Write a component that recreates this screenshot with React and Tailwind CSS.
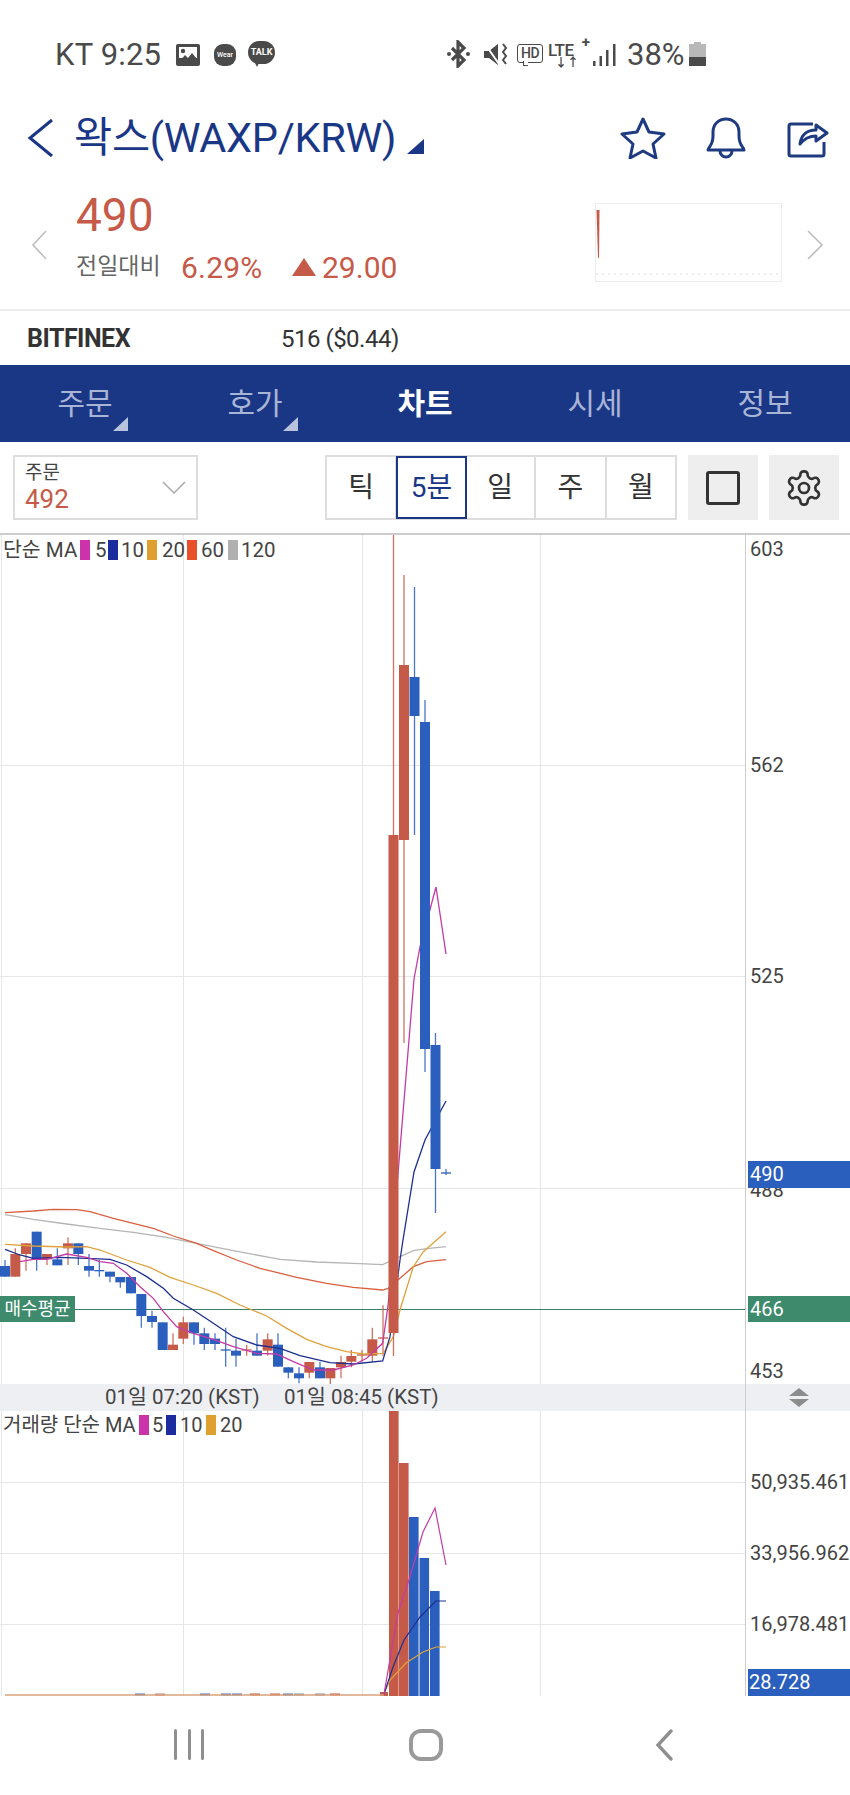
import React from "react";

const RED = "#c65a48";
const BLUE = "#2b5fbe";

// candles read off the picture: [x, color, bodyTop, bodyBottom, wickTop, wickBottom], page px
const z = (v) => 1180 + v / 3;
const smallCandles = [
  [15, "b", 258, 290, 240, 290], [46, "r", 222, 290, 205, 290], [78, "r", 190, 222, 190, 272],
  [110, "b", 155, 238, 155, 272], [141, "r", 222, 238, 222, 255], [172, "b", 238, 256, 205, 256],
  [204, "r", 190, 205, 172, 255], [235, "b", 190, 222, 190, 255], [267, "b", 258, 272, 222, 290],
  [298, "b", 272, 274, 240, 290], [330, "b", 275, 290, 275, 307], [361, "b", 291, 307, 291, 323],
  [393, "b", 291, 340, 291, 340], [424, "b", 342, 408, 342, 443], [456, "b", 408, 426, 392, 443],
  [488, "b", 427, 510, 427, 510], [519, "r", 494, 510, 460, 510], [550, "r", 427, 476, 410, 492],
  [582, "b", 427, 460, 427, 494], [613, "b", 460, 492, 443, 510], [645, "b", 476, 492, 460, 510],
  [677, "b", 510, 512, 443, 560], [708, "b", 512, 527, 476, 560], [740, "r", 510, 512, 494, 527],
  [771, "b", 512, 527, 460, 527], [803, "r", 478, 512, 460, 527], [834, "b", 494, 560, 460, 560],
  [865, "b", 562, 578, 562, 595], [897, "b", 580, 595, 562, 610], [928, "r", 546, 578, 546, 595],
  [960, "b", 562, 595, 545, 595], [991, "r", 564, 595, 564, 612], [1023, "r", 546, 562, 527, 595],
  [1054, "r", 528, 545, 510, 562], [1086, "r", 525, 527, 510, 545], [1117, "r", 478, 527, 443, 545],
  [1149, "r", 474, 476, 376, 527],
].map(([x, c, bt, bb, wt, wb]) => [x / 3, c, z(bt), z(bb), z(wt), z(wb)]);

const bigCandles = [
  [393.5, "r", 835, 1333, 535, 1356],
  [404, "r", 665, 840, 575, 1043],
  [414.5, "b", 677, 716, 587, 835],
  [425, "b", 722, 1049, 700, 1072],
  [435.5, "b", 1045, 1169, 1033, 1213],
  [446, "b", 1173, 1175, 1169, 1175],
];

const pts = (list) => list.map(([x, y]) => `${x / 3},${z(y)}`).join(" ");
const raw = (list) => list.map(([x, y]) => `${x},${y}`).join(" ");

const ma60 = pts([[15, 98], [100, 93], [160, 88], [230, 89], [270, 95], [340, 115], [400, 130], [460, 145], [520, 168], [590, 190], [640, 212], [710, 240], [780, 265], [890, 292], [980, 310], [1060, 322], [1148, 330], [1165, 325], [1200, 295], [1240, 260], [1280, 245], [1338, 239]]);
const ma120 = pts([[15, 104], [100, 118], [200, 132], [300, 145], [400, 157], [500, 172], [590, 190], [700, 212], [840, 238], [950, 246], [1060, 250], [1148, 254], [1200, 230], [1240, 212], [1280, 206], [1338, 200]]);
const ma20 = pts([[15, 193], [100, 198], [200, 201], [260, 200], [300, 210], [380, 240], [450, 262], [510, 292], [580, 315], [650, 340], [720, 375], [800, 408], [860, 445], [920, 478], [980, 500], [1040, 515], [1090, 522], [1150, 520], [1180, 470], [1200, 390], [1240, 260], [1270, 215], [1338, 155]]);
const ma10 = pts([[15, 208], [60, 225], [100, 235], [180, 232], [260, 235], [330, 238], [380, 255], [440, 290], [490, 325], [520, 355], [580, 390], [640, 430], [700, 470], [770, 495], [840, 505], [900, 527], [990, 548], [1060, 552], [1148, 543], [1170, 470], [1200, 240], [1209, 180]]) + " 414,1172 425,1140 446,1101";
const ma5 = pts([[60, 245], [100, 238], [140, 238], [200, 222], [260, 232], [300, 245], [340, 250], [380, 280], [420, 320], [460, 355], [490, 395], [530, 440], [580, 460], [640, 478], [700, 500], [770, 520], [830, 522], [880, 545], [940, 570], [1000, 570], [1060, 555], [1100, 535], [1148, 490], [1165, 370]]) + " 397,1186 414,979 420,947 436,887 446,954";

function Candle({ c }) {
  const [x, color, bt, bb, wt, wb] = c;
  const fill = color === "r" ? RED : BLUE;
  return (
    <g>
      <line x1={x} x2={x} y1={wt} y2={wb} stroke={fill} strokeWidth="1.3" opacity={0.85} />
      {bb - bt < 4 ? (
        <line x1={x - 5} x2={x + 5} y1={bt} y2={bt} stroke={fill} strokeWidth="1.3" />
      ) : (
        <rect x={x - 5} y={bt} width="10" height={bb - bt} fill={fill} />
      )}
    </g>
  );
}

function PriceChart() {
  return (
    <svg className="block w-[745px] h-[849px]" viewBox="0 535 745 849">
      <g stroke="#e6e6e6" strokeWidth="1">
        <line x1="1.5" x2="1.5" y1="535" y2="1384" />
        <line x1="183.5" x2="183.5" y1="535" y2="1384" />
        <line x1="362.5" x2="362.5" y1="535" y2="1384" />
        <line x1="540.5" x2="540.5" y1="535" y2="1384" />
        <line x1="0" x2="745" y1="765.5" y2="765.5" />
        <line x1="0" x2="745" y1="976.5" y2="976.5" />
        <line x1="0" x2="745" y1="1188.5" y2="1188.5" />
      </g>
      <line x1="0" x2="745" y1="1309.5" y2="1309.5" stroke="#3d7f66" strokeWidth="1" />
      {smallCandles.map((c) => <Candle key={c[0]} c={c} />)}
      <g fill="none" strokeWidth="1.3">
        <polyline points={ma120} stroke="#b5b5b5" />
        <polyline points={ma60} stroke="#d9603f" />
        <polyline points={ma20} stroke="#dfa23c" />
        <polyline points={ma10} stroke="#1d2f8f" />
        <polyline points={ma5} stroke="#c43aa8" />
      </g>
      {/* the tall candles sit on top of the averages */}
      {bigCandles.map((c) => <Candle key={c[0]} c={c} />)}
    </svg>
  );
}

function VolumeChart() {
  const bars = [
    [389, 1411, RED], [399, 1463, RED], [409, 1517, BLUE], [419.5, 1558, BLUE], [430, 1591, BLUE],
  ];
  const little = [
    [135, "#4a6fb5"], [200, "#4a6fb5"], [221, "#4a6fb5"], [232, "#4a6fb5"], [283, "#4a6fb5"],
    [294, "#8a93a8"], [315, "#8a93a8"], [155, "#c08a78"], [250, "#c65a48"], [270, "#c65a48"], [330, "#c65a48"],
  ];
  return (
    <svg className="block w-[745px] h-[285px]" viewBox="0 1411 745 285">
      <g stroke="#e6e6e6" strokeWidth="1">
        <line x1="1.5" x2="1.5" y1="1411" y2="1696" />
        <line x1="183.5" x2="183.5" y1="1411" y2="1696" />
        <line x1="362.5" x2="362.5" y1="1411" y2="1696" />
        <line x1="540.5" x2="540.5" y1="1411" y2="1696" />
        <line x1="0" x2="745" y1="1482.5" y2="1482.5" />
        <line x1="0" x2="745" y1="1553.5" y2="1553.5" />
        <line x1="0" x2="745" y1="1624.5" y2="1624.5" />
      </g>
      {little.map(([x, fill]) => <rect key={x} x={x} y="1693.5" width="10" height="2" fill={fill} />)}
      <rect x="380" y="1692" width="8" height="4" fill={RED} />
      {bars.map(([x, y, fill]) => <rect key={x} x={x} y={y} width="9.6" height={1696 - y} fill={fill} />)}
      <line x1="5" x2="384" y1="1695" y2="1695" stroke="#d8a27a" strokeWidth="1.4" />
      <g fill="none" strokeWidth="1.2">
        <polyline points={raw([[384, 1694], [390, 1680], [406, 1663], [423, 1652], [436, 1647], [446, 1647]])} stroke="#dfa23c" />
        <polyline points={raw([[384, 1694], [393, 1667], [404, 1640], [420, 1617], [436, 1601], [446, 1601]])} stroke="#1d2f8f" />
        <polyline points={raw([[384, 1694], [398, 1613], [409, 1580], [423, 1532], [435, 1508], [446, 1565]])} stroke="#c43aa8" />
      </g>
    </svg>
  );
}

function Swatch({ color }) {
  return <span className={`w-[10px] h-[20px] ${color}`} />;
}

function StatusBar() {
  return (
    <div className="h-[85px] pl-[55px] pt-[39px] flex items-start text-[#4a4a4a]">
      <span className="w-[121px] text-[31px] leading-[32px] tracking-[0.2px] whitespace-nowrap">KT 9:25</span>
      <svg className="w-[24px] h-[24px] mt-[4px]" viewBox="0 0 24 24">
        <rect width="24" height="22" y="1" rx="2" fill="#4a4a4a" />
        <rect x="3" y="4" width="18" height="11" fill="#fff" />
        <circle cx="7" cy="8" r="2.2" fill="#4a4a4a" />
        <path d="M3 19l6-7 3 3 4-5 5 6v3H3z" fill="#4a4a4a" />
      </svg>
      <span className="ml-[14px] mt-[5px] w-[22px] h-[22px] rounded-[9px] bg-[#4a4a4a] text-white text-[7px] font-medium flex items-center justify-center">Wear</span>
      <div className="relative ml-[12px] mt-[2px] w-[27px] h-[26px]">
        <span className="w-[27px] h-[23px] rounded-full bg-[#4a4a4a] text-white text-[9px] font-bold flex items-center justify-center">TALK</span>
        <span className="absolute left-[6px] top-[20px] border-l-[3px] border-r-[3px] border-t-[6px] border-l-transparent border-r-transparent border-t-[#4a4a4a]" />
      </div>
      <svg className="ml-[172px] mt-[1px] w-[23px] h-[28px]" viewBox="0 0 23 28" fill="none" stroke="#4a4a4a" strokeWidth="3.2">
        <path d="M5 8l12 12-6 6V2l6 6L5 20" />
        <circle cx="2" cy="14" r="2" fill="#4a4a4a" stroke="none" />
        <circle cx="21" cy="14" r="2" fill="#4a4a4a" stroke="none" />
      </svg>
      <svg className="ml-[13px] mt-[3px] w-[25px] h-[25px]" viewBox="0 0 25 25">
        <path d="M1 9h5l9-7v21l-9-7H1z" fill="#4a4a4a" />
        <path d="M2 2l14 20" stroke="#fff" strokeWidth="2" />
        <path d="M20 2l3 4-3 4 3 4-3 4 3 4" fill="none" stroke="#4a4a4a" strokeWidth="2" />
      </svg>
      <div className="relative ml-[9px] mt-[5px] w-[26px] h-[22px]">
        <span className="w-[26px] h-[19px] rounded-[3px] border-[1.5px] border-[#4a4a4a] text-[14px] leading-[16px] font-medium flex justify-center tracking-[-0.5px]">HD</span>
        <span className="absolute left-[6px] top-[17px] w-[5px] h-[5px] border-l-[1.5px] border-b-[1.5px] border-[#4a4a4a] bg-white" />
      </div>
      <div className="relative ml-[5px] mt-[1px] w-[39px] h-[27px]">
        <span className="absolute left-0 top-[1px] text-[17px] leading-[18px] font-medium tracking-[-0.5px]">LTE</span>
        <span className="absolute right-[-3px] top-[-5px] text-[15px] leading-[15px] font-bold">+</span>
        <span className="absolute left-[7px] top-[19px] text-[12px] leading-[9px] font-bold">↓↑</span>
      </div>
      <svg className="ml-[6px] mt-[5px] w-[23px] h-[22px]" viewBox="0 0 23 22" fill="#4a4a4a">
        <rect x="0" y="17" width="2.5" height="5" />
        <rect x="6.5" y="12" width="2.5" height="10" />
        <rect x="13" y="6" width="2.5" height="16" />
        <rect x="20" y="0" width="2.5" height="22" />
      </svg>
      <span className="ml-[11px] w-[58px] text-[31px] leading-[32px] whitespace-nowrap">38%</span>
      <div className="ml-[4px] mt-[3px] w-[17px] h-[24px] flex flex-col items-center">
        <span className="w-[7px] h-[2px] bg-[#b8b8b8]" />
        <span className="w-[17px] h-[13px] bg-[#b8b8b8]" />
        <span className="w-[17px] h-[9px] bg-[#4a4a4a]" />
      </div>
    </div>
  );
}

function Header() {
  return (
    <div className="h-[90px] pl-[27px] flex items-start text-[#1a3786]">
      <svg className="mt-[33px] w-[27px] h-[40px]" viewBox="0 0 27 40" fill="none" stroke="#1a3786" strokeWidth="3">
        <path d="M25 2L3 20l22 18" />
      </svg>
      <span className="ml-[20px] mt-[30px] w-[321px] text-[41.5px] leading-[46px] whitespace-nowrap tracking-[-0.3px]">왁스(WAXP/KRW)</span>
      <svg className="ml-[12px] mt-[54px] w-[17px] h-[15px]" viewBox="0 0 17 15"><path d="M17 0v15H0z" fill="#1a3786" /></svg>
      <svg className="ml-[196px] mt-[32px] w-[46px] h-[42px]" viewBox="0 0 46 42" fill="none" stroke="#1e3a80" strokeWidth="3" strokeLinejoin="round">
        <path d="M23 2l6 13 15 2-11 10 3 14-13-7-13 7 3-14L2 17l15-2z" />
      </svg>
      <svg className="ml-[40px] mt-[32px] w-[40px] h-[42px]" viewBox="0 0 40 42" fill="none" stroke="#1e3a80" strokeWidth="3" strokeLinejoin="round">
        <path d="M2 33c0-3 5-4 5-14V15C7 7 13 2 20 2s13 5 13 13v4c0 10 5 11 5 14z" />
        <path d="M14 34a6 6 0 0 0 12 0" />
      </svg>
      <svg className="ml-[41px] mt-[31px] w-[42px] h-[42px]" viewBox="0 0 42 42" fill="none" stroke="#1e3a80" strokeWidth="3" strokeLinejoin="round">
        <path d="M26 8H4a2 2 0 0 0-2 2v28a2 2 0 0 0 2 2h31a2 2 0 0 0 2-2V26" />
        <path d="M13 28c1-9 7-14 16-14V9l11 8-11 8v-5c-7 0-12 3-16 8z" />
      </svg>
    </div>
  );
}

function PriceRow() {
  return (
    <div className="h-[136px] border-b-2 border-[#ececec] pl-[31px] flex items-start">
      <svg className="mt-[55px] w-[16px] h-[30px]" viewBox="0 0 16 30" fill="none" stroke="#bdbdbd" strokeWidth="1.6">
        <path d="M15 1L2 15l13 14" />
      </svg>
      <div className="ml-[29px] w-[347px] text-[#c65a48]">
        <div className="mt-[12px] text-[46px] leading-[56px]">490</div>
        <div className="mt-[6px] flex items-center h-[36px]">
          <span className="text-[23px] text-[#666666] w-[105px]">전일대비</span>
          <span className="text-[30px] w-[111px] tracking-[0.2px]">6.29%</span>
          <span className="w-0 h-0 border-l-[12px] border-r-[12px] border-b-[18px] border-l-transparent border-r-transparent border-b-[#c65a48]" />
          <span className="ml-[6px] text-[30px]">29.00</span>
        </div>
      </div>
      <div className="ml-[172px] mt-[28px] w-[187px] h-[79px] border border-[#ededed]">
        <svg className="block w-[185px] h-[77px]" viewBox="0 0 185 77">
          <path d="M0.5 6L2 54 3 54 3.5 6z" fill={RED} />
          <path d="M0 70h185" stroke="#dddddd" strokeWidth="1" strokeDasharray="2 4" />
        </svg>
      </div>
      <svg className="ml-[25px] mt-[55px] w-[17px] h-[30px]" viewBox="0 0 17 30" fill="none" stroke="#bdbdbd" strokeWidth="1.6">
        <path d="M1 1l14 14L1 29" />
      </svg>
    </div>
  );
}

function ExchangeRow() {
  return (
    <div className="h-[54px] pl-[27px] pt-[2px] flex items-center text-[#333333]">
      <span className="w-[254px] text-[25px] font-bold tracking-[-0.5px]">BITFINEX</span>
      <span className="text-[24px] tracking-[-0.5px]">516 ($0.44)</span>
    </div>
  );
}

function Tabs() {
  const tabs = [
    ["주문", true], ["호가", true], ["차트", false], ["시세", false], ["정보", false],
  ];
  return (
    <div className="h-[77px] bg-[#1a3786] flex">
      {tabs.map(([t, mark], i) => (
        <div key={t} className="relative flex-1 flex items-center justify-center">
          <span className={i === 2 ? "text-[30px] font-bold text-white" : "text-[30px] text-[#a9b5d6]"}>{t}</span>
          {mark && (
            <svg className="absolute left-[113px] top-[52px] w-[15px] h-[14px]" viewBox="0 0 15 14">
              <path d="M15 0v14H0z" fill="#b9c3de" />
            </svg>
          )}
        </div>
      ))}
    </div>
  );
}

function Toolbar() {
  const cells = ["틱", "5분", "일", "주", "월"];
  return (
    <div className="h-[93px] pt-[13px] pl-[13px] flex items-start border-b-2 border-[#cccccc]">
      <div className="w-[185px] h-[65px] border-2 border-[#dddddd] pl-[10px] flex items-center justify-between pr-[10px]">
        <div>
          <div className="text-[19px] leading-[22px] text-[#444444]">주문</div>
          <div className="text-[26px] leading-[30px] text-[#c65a48]">492</div>
        </div>
        <svg className="w-[24px] h-[13px]" viewBox="0 0 24 13" fill="none" stroke="#aaaaaa" strokeWidth="1.5">
          <path d="M1 1l11 11L23 1" />
        </svg>
      </div>
      <div className="ml-[127px] h-[65px] w-[352px] flex border-2 border-[#dddddd]">
        {cells.map((c, i) => (
          <div
            key={c}
            className={
              i === 1
                ? "relative flex-1 flex items-center justify-center text-[28px] text-[#1a3786] outline-2 outline-[#1a3786] -outline-offset-1 z-10"
                : "flex-1 flex items-center justify-center text-[28px] text-[#333333] border-r-2 border-[#dddddd] last:border-r-0"
            }
          >
            {c}
          </div>
        ))}
      </div>
      <div className="ml-[11px] w-[70px] h-[65px] bg-[#eeeeee] flex items-center justify-center">
        <span className="w-[34px] h-[34px] rounded-[3px] border-[3px] border-[#333333]" />
      </div>
      <div className="ml-[11px] w-[70px] h-[65px] bg-[#eeeeee] flex items-center justify-center">
        <svg className="w-[40px] h-[40px]" viewBox="0 0 24 24" fill="none" stroke="#333333" strokeWidth="1.6" strokeLinejoin="round">
          <path d="M12.2 2h-.4a2 2 0 0 0-2 2v.2a2 2 0 0 1-1 1.7l-.4.3a2 2 0 0 1-2 0l-.2-.1a2 2 0 0 0-2.7.7l-.2.4a2 2 0 0 0 .7 2.7l.2.1a2 2 0 0 1 1 1.7v.5a2 2 0 0 1-1 1.8l-.2.1a2 2 0 0 0-.7 2.7l.2.4a2 2 0 0 0 2.7.7l.2-.1a2 2 0 0 1 2 0l.4.3a2 2 0 0 1 1 1.7v.2a2 2 0 0 0 2 2h.4a2 2 0 0 0 2-2v-.2a2 2 0 0 1 1-1.7l.4-.3a2 2 0 0 1 2 0l.2.1a2 2 0 0 0 2.7-.7l.2-.4a2 2 0 0 0-.7-2.7l-.2-.1a2 2 0 0 1-1-1.8v-.5a2 2 0 0 1 1-1.7l.2-.1a2 2 0 0 0 .7-2.7l-.2-.4a2 2 0 0 0-2.7-.7l-.2.1a2 2 0 0 1-2 0l-.4-.3a2 2 0 0 1-1-1.7V4a2 2 0 0 0-2-2z" />
          <circle cx="12" cy="12" r="3" />
        </svg>
      </div>
    </div>
  );
}

function PriceLegend() {
  return (
    <div className="absolute left-[3px] top-[5px] flex items-center text-[20.5px] leading-[20px] text-[#444444] whitespace-nowrap">
      <span className="w-[77px]">단순 MA</span>
      <Swatch color="bg-[#cc33aa]" />
      <span className="ml-[5px] w-[13px]">5</span>
      <Swatch color="bg-[#1c2c9e]" />
      <span className="ml-[3px] w-[26px]">10</span>
      <Swatch color="bg-[#e0a030]" />
      <span className="ml-[5px] w-[25px]">20</span>
      <Swatch color="bg-[#e8502a]" />
      <span className="ml-[4px] w-[27px]">60</span>
      <Swatch color="bg-[#b0b0b0]" />
      <span className="ml-[3px]">120</span>
    </div>
  );
}

function VolumeLegend() {
  return (
    <div className="absolute left-[3px] top-[4px] flex items-center text-[20px] leading-[20px] text-[#444444] whitespace-nowrap">
      <span className="w-[136px]">거래량 단순 MA</span>
      <Swatch color="bg-[#cc33aa]" />
      <span className="ml-[3px] w-[14px]">5</span>
      <Swatch color="bg-[#1c2c9e]" />
      <span className="ml-[4px] w-[26px]">10</span>
      <Swatch color="bg-[#e0a030]" />
      <span className="ml-[4px]">20</span>
    </div>
  );
}

function AxisLabel({ y, children }) {
  return (
    <span className="absolute left-[4px] text-[20px] leading-[24px] text-[#444444] whitespace-nowrap" style={{ top: y - 12 }}>
      {children}
    </span>
  );
}

function Charts() {
  return (
    <div>
      {/* price pane, page y 535 */}
      <div className="relative flex">
        <PriceChart />
        <PriceLegend />
        <span className="absolute left-0 top-[761px] h-[26px] w-[75px] bg-[#3d8a6c] text-white text-[18px] leading-[26px] text-center">매수평균</span>
        <div className="relative flex-1 border-l border-[#cccccc] h-[849px]">
          <AxisLabel y={14}>603</AxisLabel>
          <AxisLabel y={230}>562</AxisLabel>
          <AxisLabel y={441}>525</AxisLabel>
          <AxisLabel y={655}>488</AxisLabel>
          <span className="absolute left-[2px] right-0 top-[626px] h-[27px] bg-[#2b5fbe] text-white text-[20px] leading-[26px] pl-[2px]">490</span>
          <span className="absolute left-[2px] right-0 top-[761px] h-[26px] bg-[#3d8a6c] text-white text-[20px] leading-[26px] pl-[2px]">466</span>
          <AxisLabel y={836}>453</AxisLabel>
        </div>
      </div>
      {/* time strip */}
      <div className="relative h-[27px] bg-[#eeeff3] flex">
        <span className="absolute left-[105px] text-[20.5px] leading-[27px] text-[#444444] whitespace-nowrap">01일 07:20 (KST)</span>
        <span className="absolute left-[284px] text-[20.5px] leading-[27px] text-[#444444] whitespace-nowrap">01일 08:45 (KST)</span>
        <span className="ml-[745px] h-[27px] border-l border-[#cccccc]" />
        <svg className="ml-[42px] mt-[4px] w-[22px] h-[19px]" viewBox="0 0 22 19" fill="#8c8c8c">
          <path d="M11 0l10 8H1zM1 11h20l-10 8z" />
        </svg>
      </div>
      {/* volume pane */}
      <div className="relative flex">
        <VolumeChart />
        <VolumeLegend />
        <div className="relative flex-1 border-l border-[#cccccc] h-[285px]">
          <AxisLabel y={71}>50,935.461</AxisLabel>
          <AxisLabel y={142}>33,956.962</AxisLabel>
          <AxisLabel y={213}>16,978.481</AxisLabel>
          <span className="absolute left-[2px] right-0 top-[258px] h-[27px] bg-[#2b5fbe] text-white text-[20px] leading-[27px] pl-[1px]">28.728</span>
        </div>
      </div>
    </div>
  );
}

function NavBar() {
  return (
    <div className="h-[99px] flex items-start">
      <div className="ml-[174px] mt-[33px] w-[30px] h-[31px] flex justify-between">
        <span className="w-[3px] bg-[#8f8f8f] rounded-sm" />
        <span className="w-[3px] bg-[#8f8f8f] rounded-sm" />
        <span className="w-[3px] bg-[#8f8f8f] rounded-sm" />
      </div>
      <span className="ml-[205px] mt-[33px] w-[34px] h-[32px] rounded-[12px] border-4 border-[#9a9a9a]" />
      <svg className="ml-[212px] mt-[33px] w-[19px] h-[32px]" viewBox="0 0 19 32" fill="none" stroke="#8f8f8f" strokeWidth="3.4" strokeLinecap="round">
        <path d="M16 2L3 16l13 14" />
      </svg>
    </div>
  );
}

export default function App() {
  return (
    <div className="w-[850px] h-[1795px] bg-white overflow-hidden font-['Roboto','Noto_Sans_CJK_KR',sans-serif]">
      <StatusBar />
      <Header />
      <PriceRow />
      <ExchangeRow />
      <Tabs />
      <Toolbar />
      <Charts />
      <NavBar />
    </div>
  );
}
